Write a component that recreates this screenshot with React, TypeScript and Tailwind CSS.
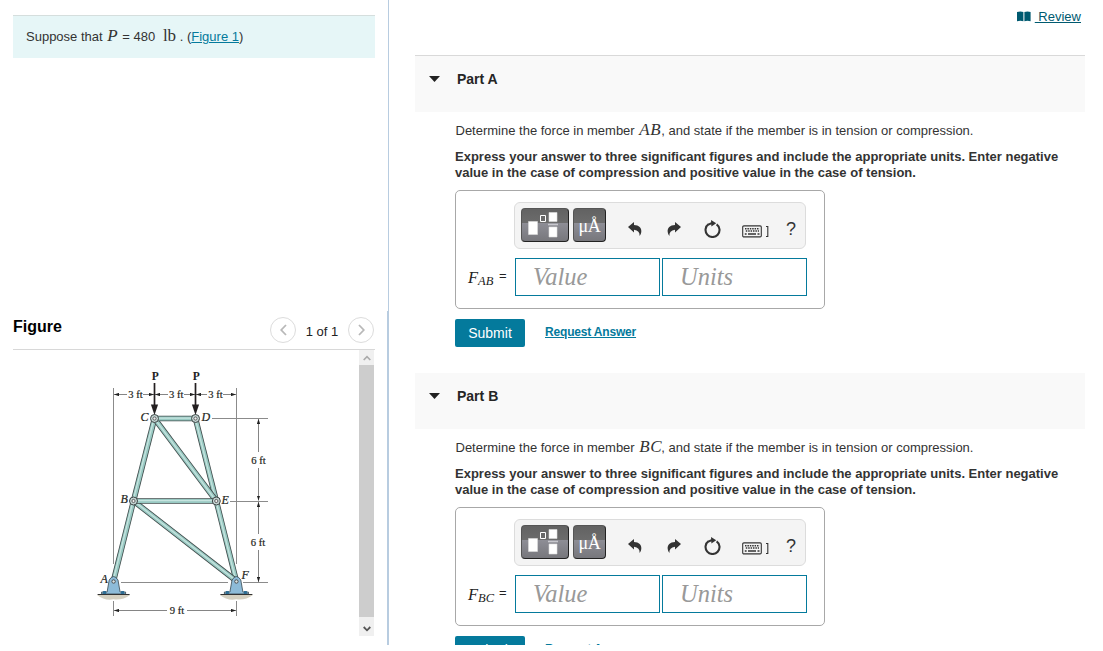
import type { ReactNode } from 'react';

const serif = "font-['Liberation_Serif',serif]";

const members = [
  [113.5, 581, 133.5, 501],
  [133.5, 501, 154.5, 418.5],
  [195.5, 418.5, 216.3, 501],
  [216.3, 501, 236.3, 581],
  [154.5, 418.5, 216.3, 501],
  [133.5, 501, 236.3, 581],
  [154.5, 418.5, 195.5, 418.5],
  [133.5, 501, 216.3, 501],
];

const joints = [
  [154.5, 418.5],
  [195.5, 418.5],
  [133.5, 501],
  [216.3, 501],
];

const supports = [113.6, 236.4];

const jointLabels = [
  ['C', 140.5, 421],
  ['D', 201.5, 421],
  ['B', 120.5, 503],
  ['E', 221.5, 503.5],
  ['A', 100.5, 583],
  ['F', 241.5, 579],
] as const;

const dimensionLabels = [
  ['3 ft', 135.5, 398],
  ['3 ft', 176.3, 398],
  ['3 ft', 215.5, 398],
  ['6 ft', 258.5, 464],
  ['6 ft', 258, 546],
  ['9 ft', 177, 614],
] as const;

const Support = ({ x }: { x: number }) => (
  <g>
    <path d={`M${x - 16.5} 595 H${x + 16.5} Q${x + 9} 600.5 ${x} 599.3 Q${x - 9} 601 ${x - 16.5} 595 Z`} fill="#d5d0c0" />
    <path d={`M${x - 12} 594 V592 H${x - 6.5} L${x - 4.4} 580 Q${x} 573 ${x + 4.4} 580 L${x + 6.5} 592 H${x + 12} V594 Z`} fill="#8dbbd8" stroke="#37474f" strokeWidth="0.8" />
    <path d={`M${x - 16} 594.5 H${x + 16}`} stroke="#333" strokeWidth="1" />
    <path d={`M${x - 9} 591 v3 M${x + 9} 591 v3`} stroke="#2e6d93" strokeWidth="3" />
    <circle cx={x} cy="581.5" r="1.7" fill="#d9e4e4" stroke="#444" strokeWidth="0.9" />
  </g>
);

const Truss = () => (
  <svg width="345" height="286" viewBox="13 350 345 286" className="block">
    <defs>
      <marker id="tip" viewBox="0 0 6 4" refX="6" refY="2" markerWidth="5" markerHeight="3.5" markerUnits="userSpaceOnUse" orient="auto-start-reverse">
        <path d="M0 0 L6 2 L0 4 Z" fill="#222" />
      </marker>
    </defs>

    <g stroke="#8b8b8b" strokeWidth="1" fill="none">
      <path d="M113.5 388 V564 M236.5 388 V564 M113.5 601 V616 M236.5 601 V616" />
      <path d="M212 418.5 H268 M230 501.5 H268 M121 582.5 H228 M243 582.5 H268" />
    </g>

    <g stroke="#777" strokeWidth="0.9" fill="none">
      <path d="M127 394.5 H114" markerEnd="url(#tip)" />
      <path d="M143 394.5 H154" markerEnd="url(#tip)" />
      <path d="M168 394.5 H155" markerEnd="url(#tip)" />
      <path d="M184 394.5 H195" markerEnd="url(#tip)" />
      <path d="M207 394.5 H196" markerEnd="url(#tip)" />
      <path d="M223 394.5 H236" markerEnd="url(#tip)" />
      <path d="M258.5 452 V419" markerEnd="url(#tip)" />
      <path d="M258.5 468 V500.5" markerEnd="url(#tip)" />
      <path d="M258.5 534 V502" markerEnd="url(#tip)" />
      <path d="M258.5 550 V582" markerEnd="url(#tip)" />
      <path d="M167 610.5 H114" markerEnd="url(#tip)" />
      <path d="M187 610.5 H236" markerEnd="url(#tip)" />
    </g>

    {members.map(([x1, y1, x2, y2], i) => (
      <g key={i}>
        <line x1={x1} y1={y1} x2={x2} y2={y2} stroke="#3f4b4b" strokeWidth="5.6" />
        <line x1={x1} y1={y1} x2={x2} y2={y2} stroke="#98c9c2" strokeWidth="4" />
        <line x1={x1 - 0.4} y1={y1 - 0.4} x2={x2 - 0.4} y2={y2 - 0.4} stroke="#c6e4df" strokeWidth="1.3" />
      </g>
    ))}

    {supports.map((x) => (
      <Support key={x} x={x} />
    ))}

    {joints.map(([x, y], i) => (
      <g key={i}>
        <circle cx={x} cy={y} r="4" fill="#c4d5d3" stroke="#3c4444" strokeWidth="1" />
        <circle cx={x} cy={y} r="1.6" fill="#eee" stroke="#555" strokeWidth="0.9" />
      </g>
    ))}

    {[154.5, 195.5].map((x) => (
      <g key={x}>
        <line x1={x} y1="383" x2={x} y2="406" stroke="#231f20" strokeWidth="1.7" />
        <path d={`M${x - 3.6} 404.5 H${x + 3.6} L${x} 415 Z`} fill="#231f20" />
        <text x={x + 0.8} y="380" textAnchor="middle" fontSize="11.5" fontWeight="bold" fill="#231f20" className={serif}>
          P
        </text>
      </g>
    ))}

    {jointLabels.map(([name, x, y]) => (
      <text key={name} x={x} y={y} fontSize="12" fontStyle="italic" fill="#231f20" stroke="#231f20" strokeWidth="0.2" className={serif}>
        {name}
      </text>
    ))}
    {dimensionLabels.map(([text, x, y], i) => (
      <text key={i} x={x} y={y} textAnchor="middle" fontSize="10.6" fill="#231f20" stroke="#231f20" strokeWidth="0.2" className={serif}>
        {text}
      </text>
    ))}
  </svg>
);

const UndoArrow = ({ flip = false }: { flip?: boolean }) => (
  <svg width="14" height="14" viewBox="0 0 14 14" className={flip ? '-scale-x-100' : ''}>
    <path d="M0 5 L6 0 V3 C11 3 13.8 6 13.3 10 Q13.1 12.4 11.6 14 Q12 8.4 6 7.7 V10.5 Z" fill="#333" />
  </svg>
);

const ResetIcon = () => (
  <svg width="17" height="18" viewBox="0 0 17 18">
    <path d="M4.6 4.2 A7 7 0 1 0 12.6 4.3" fill="none" stroke="#333" strokeWidth="2.1" />
    <path d="M7 0 L12.2 3.2 L7.4 6.4 Z" fill="#333" />
    <path d="M4.3 4.6 L8 3" stroke="#333" strokeWidth="2" />
  </svg>
);

const KeyboardIcon = () => (
  <svg width="27" height="13" viewBox="0 0 27 13">
    <rect x="0.7" y="0.9" width="18.6" height="11" rx="1.2" fill="#f4f4f4" stroke="#333" strokeWidth="1.1" />
    <path d="M3 3.7 H17.5 M3.8 6 H17" stroke="#333" strokeWidth="1.5" strokeDasharray="1.5 0.9" />
    <path d="M2.8 9 h1.8 M6 9 h8 M15.5 9 h2" stroke="#333" strokeWidth="1.4" />
    <path d="M24 1.5 H25.8 V11.5 H24" fill="none" stroke="#333" strokeWidth="1.1" />
  </svg>
);

const TemplateIcon = () => (
  <svg width="30" height="26" viewBox="0 0 30 26" className="-ml-1">
    <path d="M0.5 9.5 h9 v13 h-9 z M21 0.5 h8 v9 h-8 z M21 15 h8 v10 h-8 z" fill="#fff" stroke="#ddd" strokeWidth="0.6" />
    <path d="M12.5 3.5 h5 v6 h-5 z" fill="none" stroke="#fff" />
    <path d="M20 12.5 H30" stroke="#c7c7cd" strokeWidth="1.6" />
  </svg>
);

const ToolButton = ({ className, children }: { className: string; children: ReactNode }) => (
  <button
    className={`h-[34px] flex items-center justify-center rounded-[4px] border border-[#555] border-b-[#222] border-r-[#222] bg-[linear-gradient(#626262_0%,#6c6c6c_44%,#8d8d95_45%,#77777c_100%)] text-white ${className}`}
  >
    {children}
  </button>
);

const Part = ({ name, member, first = false }: { name: string; member: string; first?: boolean }) => (
  <section className="h-[317px] shrink-0">
    <div className={`flex h-[57px] border-t bg-[#f9f9f9] pl-[14px] pt-[15px] ${first ? 'border-[#d9d9d9]' : 'border-white'}`}>
      <svg width="11" height="6" viewBox="0 0 11 6" className="mt-[5px]">
        <path d="M0 0 H11 L5.5 6 Z" fill="#222" />
      </svg>
      <h2 className="ml-[17px] text-[14px] leading-4 font-bold text-[#252525]">Part {name}</h2>
    </div>

    <div className="pl-10">
      <p className="mt-[10px] h-4 whitespace-nowrap pl-[0.5px] text-[13px] leading-4 text-[#333]">
        Determine the force in member{' '}
        <span className={`ml-px inline-block w-[22px] text-[17px] leading-4 italic tracking-[0.6px] ${serif}`}>{member}</span>, and state if the member is in tension or compression.
      </p>
      <p className="mt-[11px] whitespace-nowrap text-[13px] leading-4 font-bold text-[#333]">
        Express your answer to three significant figures and include the appropriate units. Enter negative
        <br />
        value in the case of compression and positive value in the case of tension.
      </p>

      <div className="mt-[9px] h-[119px] w-[370px] rounded-[5px] border border-[#a8a8a8] pt-[11px]">
        <div className="ml-[58px] flex h-[47px] w-[292px] items-start rounded-[6px] border border-[#dcdcdc] bg-[#f4f4f4] pl-[6px] pt-[5px] text-[#333]">
          <ToolButton className="w-12">
            <TemplateIcon />
          </ToolButton>
          <ToolButton className="ml-1 w-[33px]">
            <span className={`pt-0.5 text-[18px] leading-5 tracking-[-0.3px] ${serif}`}>μÅ</span>
          </ToolButton>
          <div className="ml-[22px] mt-[14px]"><UndoArrow /></div>
          <div className="ml-[25px] mt-[14px]"><UndoArrow flip /></div>
          <div className="ml-[23px] mt-[12px]"><ResetIcon /></div>
          <div className="ml-[21px] mt-[17px]"><KeyboardIcon /></div>
          <span className="ml-[17px] mt-[11px] text-[18px] leading-5">?</span>
        </div>

        <div className="mt-[9px] flex">
          <div className="flex w-[59px] pl-[12px] pt-[10px] text-[#222]">
            <span className={`w-[27px] whitespace-nowrap text-[16.5px] leading-5 italic ${serif}`}>
              F<span className="relative top-[2px] text-[12.5px]">{member}</span>
            </span>
            <span className="ml-[4px] text-[13px] leading-4">=</span>
          </div>
          <div className={`h-[38px] w-[145px] border border-[#047a9c] pl-[17px] text-[24.5px] leading-[36px] italic text-[#999] ${serif}`}>Value</div>
          <div className={`ml-0.5 h-[38px] w-[145px] border border-[#047a9c] pl-[17px] text-[24.5px] leading-[36px] italic text-[#999] ${serif}`}>Units</div>
        </div>
      </div>

      <div className="mt-[10px] flex">
        <button className="h-7 w-[70px] rounded-[2px] bg-[#047a9c] pt-px text-[14px] leading-[27px] text-white">Submit</button>
        <a className="ml-5 mt-[5px] text-[12px] leading-4 font-bold tracking-[-0.18px] text-[#047a9c] underline">Request Answer</a>
      </div>
    </div>
  </section>
);

const PageArrow = ({ next = false }: { next?: boolean }) => (
  <button className="flex size-[26px] items-center justify-center rounded-full border border-[#dcdcdc]">
    <svg width="7" height="12" viewBox="0 0 7 12" className={next ? '-scale-x-100' : ''}>
      <path d="M6 1 L1.2 6 L6 11" fill="none" stroke="#b8b8b8" strokeWidth="1.8" />
    </svg>
  </button>
);

export default function App() {
  return (
    <div className="h-[651px] w-[1103px] bg-white font-['Liberation_Sans',sans-serif]">
      <div className="flex h-[645px] overflow-hidden">
        <aside className="flex w-[389px] shrink-0 flex-col">
          <div className="h-[311px] border-r border-[#b8cce0] pl-[13px] pt-[15px]">
            <div className="h-[43px] w-[362px] border-t border-[#d5dedd] bg-[#e6f6f7] pl-[13px] pt-[12px] text-[13px] leading-[18px] whitespace-nowrap text-[#333]">
              Suppose that <span className={`ml-px inline-block w-[11.5px] text-[17px] leading-4 italic ${serif}`}>P</span> = 480{' '}
              <span className={`ml-[4px] text-[17px] leading-4 ${serif}`}>lb</span> . (<a className="text-[#047a9c] underline">Figure 1</a>)
            </div>
          </div>

          <div className="flex-1 border-r-2 border-[#b8cce0] pl-[13px]">
            <div className="flex h-[39px] w-[362px] border-b border-[#d8d8d8] pt-[6px]">
              <h2 className="w-[257px] text-[16px] leading-5 font-bold text-black">Figure</h2>
              <PageArrow />
              <span className="w-[52px] pt-[7px] text-center text-[13px] leading-4 text-[#222]">1 of 1</span>
              <PageArrow next />
            </div>
            <div className="flex h-[286px]">
              <Truss />
              <div className="ml-[1px] flex w-[15px] flex-col bg-[#f0f0f0]">
                <div className="flex h-[15px] items-center justify-center">
                  <svg width="8" height="6" viewBox="0 0 8 6">
                    <path d="M0.7 5 L4 1.7 L7.3 5" fill="none" stroke="#aaa" strokeWidth="1.7" />
                  </svg>
                </div>
                <div className="h-[252px] bg-[#cdcdcd]" />
                <div className="flex h-[19px] items-center justify-center pt-1">
                  <svg width="8" height="6" viewBox="0 0 8 6">
                    <path d="M0.7 1 L4 4.3 L7.3 1" fill="none" stroke="#555" strokeWidth="1.8" />
                  </svg>
                </div>
              </div>
            </div>
          </div>
        </aside>

        <main className="flex flex-1 flex-col pl-[26px] pr-[18px]">
          <div className="flex h-[55px] shrink-0 justify-end pr-1 pt-2 text-[#005a70]">
            <svg width="14" height="11" viewBox="0 0 14 11" className="mr-1 mt-[3px]">
              <path d="M0 1 Q3.5 0 6.4 1 V10.2 Q3.5 9.2 0 10.2 Z M7.4 1 Q10.5 0 13.6 1 V10.2 Q10.5 9.2 7.4 10.2 Z" fill="#005a70" />
            </svg>
            <a className="mt-px text-[13px] leading-4 whitespace-pre underline"> Review</a>
          </div>
          <Part name="A" member="AB" first />
          <Part name="B" member="BC" />
        </main>
      </div>
    </div>
  );
}
